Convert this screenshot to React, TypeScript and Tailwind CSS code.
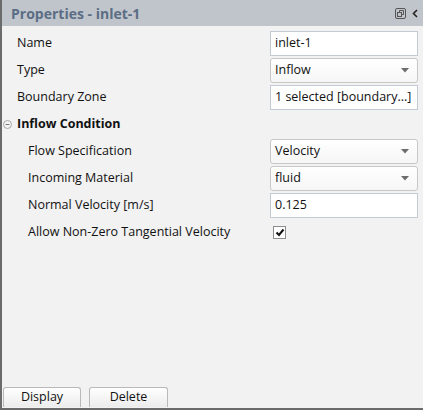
import React from 'react';

const font = { fontFamily: '"Open Sans", "Noto Sans", sans-serif' };

function Caret() {
  return (
    <svg width="8" height="5" viewBox="0 0 8 5" className="shrink-0">
      <path d="M0 0 L8 0 L4 4.5 Z" fill="#6d6d6d" />
    </svg>
  );
}

function TextBox({ value }: { value: string }) {
  return (
    <div className="flex h-[25px] w-[148px] items-center border border-[#c4cad3] bg-white pl-[4px] text-[12.5px] text-[#111]">
      {value}
    </div>
  );
}

function Select({ value }: { value: string }) {
  return (
    <div className="flex h-[25px] w-[148px] items-center justify-between rounded-[3px] border border-[#c8c8c8] bg-gradient-to-b from-white to-[#f6f6f6] pl-[4px] pr-[8px] text-[12.5px] text-[#111]">
      <span>{value}</span>
      <Caret />
    </div>
  );
}

function Row({ label, indent, children }: { label: string; indent?: boolean; children: React.ReactNode }) {
  return (
    <div className="flex h-[27px] items-center">
      <div className={`w-[268px] text-[12.5px] text-[#111] ${indent ? 'pl-[26px]' : 'pl-[15px]'}`}>{label}</div>
      {children}
    </div>
  );
}

export default function App() {
  return (
    <div className="flex h-[410px] w-[423px] flex-col bg-[#f2f2f2]" style={font}>
      <div className="flex h-[26px] shrink-0 items-center justify-between border-l-2 border-[#6b6b6b] bg-[#c0c5cb] pl-[9px] pr-[5px]">
        <span className="text-[14px] font-bold text-[#5b6d85]">Properties - inlet-1</span>
        <div className="flex items-center gap-[6px]">
          <svg width="11" height="11" viewBox="0 0 11 11">
            <rect x="0.5" y="0.5" width="10" height="10" rx="1.5" fill="none" stroke="#555" />
            <rect x="2.5" y="4.5" width="4" height="4" fill="none" stroke="#555" />
            <path d="M4.5 4.5 V2.5 H8.5 V6.5 H6.5" fill="none" stroke="#555" />
          </svg>
          <svg width="6" height="9" viewBox="0 0 6 9">
            <path d="M5 1 L1.5 4.5 L5 8" fill="none" stroke="#222" strokeWidth="1.6" />
          </svg>
        </div>
      </div>
      <div className="flex flex-1 flex-col border-l-2 border-[#6b6b6b] pt-[4px]">
        <Row label="Name"><TextBox value="inlet-1" /></Row>
        <Row label="Type"><Select value="Inflow" /></Row>
        <Row label="Boundary Zone"><TextBox value="1 selected [boundary...]" /></Row>
        <div className="flex h-[27px] items-center gap-[5px] pl-[1px]">
          <svg width="9" height="9" viewBox="0 0 9 9">
            <circle cx="4.5" cy="4.5" r="4" fill="#f4f4f4" stroke="#a9a9a9" />
            <path d="M2.5 4.5 H6.5" stroke="#7a7a7a" />
          </svg>
          <span className="text-[12.5px] font-bold text-[#111]">Inflow Condition</span>
        </div>
        <Row label="Flow Specification" indent><Select value="Velocity" /></Row>
        <Row label="Incoming Material" indent><Select value="fluid" /></Row>
        <Row label="Normal Velocity [m/s]" indent><TextBox value="0.125" /></Row>
        <Row label="Allow Non-Zero Tangential Velocity" indent>
          <div className="ml-[3px] flex h-[13px] w-[13px] items-center justify-center border border-[#8d8d8d] bg-white">
            <svg width="10" height="9" viewBox="0 0 10 9">
              <path d="M1.5 4.5 L4 7 L8.5 1.5" fill="none" stroke="#111" strokeWidth="2" />
            </svg>
          </div>
        </Row>
        <div className="flex-1" />
        <div className="flex gap-[8px] pb-[1px] pl-[1px]">
          <button className="h-[20px] w-[78px] rounded-t-[3px] border border-b-0 border-[#b9b9b9] bg-gradient-to-b from-white to-[#ececec] text-[12.5px] text-[#111]">Display</button>
          <button className="h-[20px] w-[79px] rounded-t-[3px] border border-b-0 border-[#b9b9b9] bg-gradient-to-b from-white to-[#ececec] text-[12.5px] text-[#111]">Delete</button>
        </div>
      </div>
      <div className="h-[2px] shrink-0 bg-[#6b6b6b]" />
    </div>
  );
}
